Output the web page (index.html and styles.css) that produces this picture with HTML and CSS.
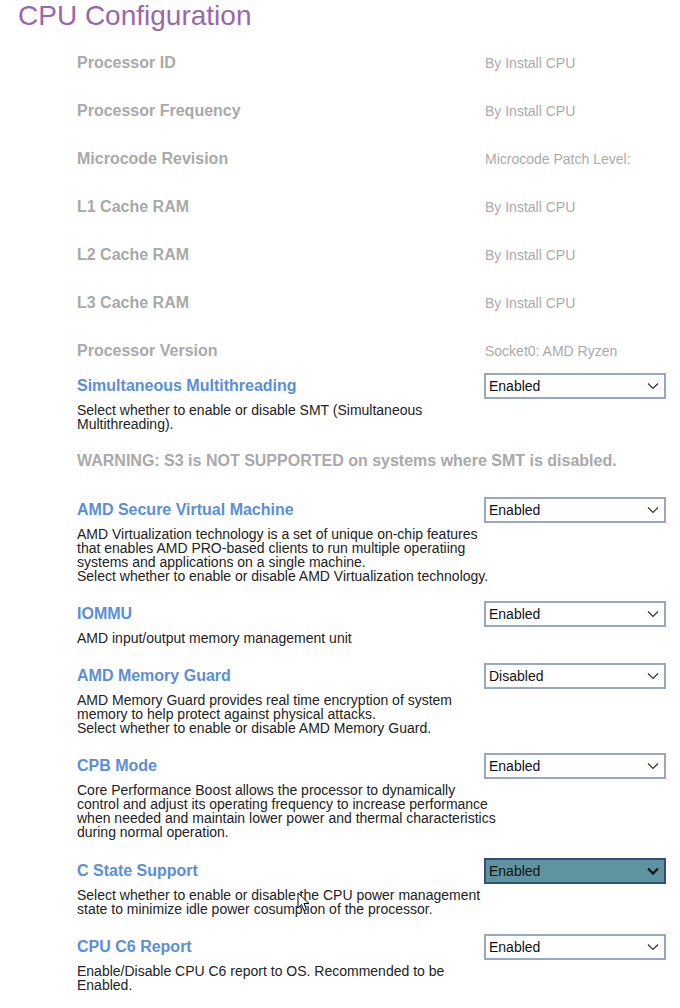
FILE: index.html
```html
<!DOCTYPE html>
<html>
<head>
<meta charset="utf-8">
<link rel="stylesheet" href="styles.css">
</head>
<body>
<div class="page">
  <h1 class="title">CPU Configuration</h1>
  <div class="info">
    <div class="info-row"><span class="info-label">Processor ID</span><span class="info-value">By Install CPU</span></div>
    <div class="info-row"><span class="info-label">Processor Frequency</span><span class="info-value">By Install CPU</span></div>
    <div class="info-row"><span class="info-label">Microcode Revision</span><span class="info-value">Microcode Patch Level:</span></div>
    <div class="info-row"><span class="info-label">L1 Cache RAM</span><span class="info-value">By Install CPU</span></div>
    <div class="info-row"><span class="info-label">L2 Cache RAM</span><span class="info-value">By Install CPU</span></div>
    <div class="info-row"><span class="info-label">L3 Cache RAM</span><span class="info-value">By Install CPU</span></div>
    <div class="info-row"><span class="info-label">Processor Version</span><span class="info-value">Socket0: AMD Ryzen</span></div>
  </div>

  <div class="setting">
    <div class="setting-head">
      <span class="setting-name">Simultaneous Multithreading</span>
      <div class="select"><span>Enabled</span><svg class="chev" width="12" height="8" viewBox="0 0 12 8"><path d="M1 1.5 L6 6.5 L11 1.5" fill="none" stroke="#333" stroke-width="1.2"/></svg></div>
    </div>
    <p class="desc">Select whether to enable or disable SMT (Simultaneous Multithreading).</p>
    <p class="warning">WARNING: S3 is NOT SUPPORTED on systems where SMT is disabled.</p>
  </div>

  <div class="setting">
    <div class="setting-head">
      <span class="setting-name">AMD Secure Virtual Machine</span>
      <div class="select"><span>Enabled</span><svg class="chev" width="12" height="8" viewBox="0 0 12 8"><path d="M1 1.5 L6 6.5 L11 1.5" fill="none" stroke="#333" stroke-width="1.2"/></svg></div>
    </div>
    <p class="desc">AMD Virtualization technology is a set of unique on-chip features that enables AMD PRO-based clients to run multiple operatiing systems and applications on a single machine.<br>Select whether to enable or disable AMD Virtualization technology.</p>
  </div>

  <div class="setting">
    <div class="setting-head">
      <span class="setting-name">IOMMU</span>
      <div class="select"><span>Enabled</span><svg class="chev" width="12" height="8" viewBox="0 0 12 8"><path d="M1 1.5 L6 6.5 L11 1.5" fill="none" stroke="#333" stroke-width="1.2"/></svg></div>
    </div>
    <p class="desc">AMD input/output memory management unit</p>
  </div>

  <div class="setting">
    <div class="setting-head">
      <span class="setting-name">AMD Memory Guard</span>
      <div class="select"><span>Disabled</span><svg class="chev" width="12" height="8" viewBox="0 0 12 8"><path d="M1 1.5 L6 6.5 L11 1.5" fill="none" stroke="#333" stroke-width="1.2"/></svg></div>
    </div>
    <p class="desc">AMD Memory Guard provides real time encryption of system memory to help protect against physical attacks.<br>Select whether to enable or disable AMD Memory Guard.</p>
  </div>

  <div class="setting setting-loose">
    <div class="setting-head">
      <span class="setting-name">CPB Mode</span>
      <div class="select"><span>Enabled</span><svg class="chev" width="12" height="8" viewBox="0 0 12 8"><path d="M1 1.5 L6 6.5 L11 1.5" fill="none" stroke="#333" stroke-width="1.2"/></svg></div>
    </div>
    <p class="desc">Core Performance Boost allows the processor to dynamically control and adjust its operating frequency to increase performance when needed and maintain lower power and thermal characteristics during normal operation.</p>
  </div>

  <div class="setting">
    <div class="setting-head">
      <span class="setting-name">C State Support</span>
      <div class="select select-active"><span>Enabled</span><svg class="chev" width="12" height="8" viewBox="0 0 12 8"><path d="M1 1.5 L6 6.5 L11 1.5" fill="none" stroke="#111" stroke-width="2.2"/></svg></div>
    </div>
    <p class="desc">Select whether to enable or disable the CPU power management state to minimize idle power cosumption of the processor.</p>
    <svg class="cursor" width="13" height="20" viewBox="0 0 13 20"><path d="M1 1 L1 16 L4.5 12.5 L7 18.5 L9.5 17.5 L7 11.5 L12 11.5 Z" fill="#fff" stroke="#000" stroke-width="1"/></svg>
  </div>

  <div class="setting">
    <div class="setting-head">
      <span class="setting-name">CPU C6 Report</span>
      <div class="select"><span>Enabled</span><svg class="chev" width="12" height="8" viewBox="0 0 12 8"><path d="M1 1.5 L6 6.5 L11 1.5" fill="none" stroke="#333" stroke-width="1.2"/></svg></div>
    </div>
    <p class="desc">Enable/Disable CPU C6 report to OS. Recommended to be Enabled.</p>
  </div>
</div>
</body>
</html>
```

FILE: styles.css
```css
html, body {
  margin: 0;
  padding: 0;
  background: #ffffff;
}

body {
  font-family: "Liberation Sans", Arial, sans-serif;
  color: #222;
}

.page {
  width: 680px;
  height: 1008px;
  overflow: hidden;
}

.title {
  margin: 0 0 0 18px;
  font-size: 28px;
  line-height: 32px;
  font-weight: normal;
  color: #9b66b0;
}

.info {
  margin: 22px 0 0 77px;
  display: flex;
  flex-direction: column;
  gap: 30px;
}

.info-row {
  display: flex;
  height: 18px;
  line-height: 18px;
}

.info-label {
  width: 408px;
  font-size: 16px;
  font-weight: bold;
  color: #a9a9a9;
}

.info-value {
  font-size: 14px;
  color: #ababab;
}

.setting {
  position: relative;
  margin: 0 0 18px 77px;
}

.setting-loose {
  margin-bottom: 19px;
}

.info + .setting {
  margin-top: 13px;
}

.setting-head {
  display: flex;
  align-items: center;
  height: 26px;
}

.setting-name {
  width: 407px;
  font-size: 16px;
  font-weight: bold;
  color: #5b8edb;
  line-height: 26px;
}

.select {
  box-sizing: border-box;
  width: 182px;
  height: 26px;
  border: 2px solid #98a7c3;
  background: #fff;
  display: flex;
  align-items: center;
  justify-content: space-between;
  padding: 0 5px 0 3px;
  font-size: 14px;
  color: #111;
}

.select-active {
  background: #5e949f;
  border-color: #354f7d;
}

.chev {
  display: block;
}

.desc {
  margin: 4px 0 0 0;
  width: 421px;
  font-size: 14px;
  line-height: 14px;
  color: #222;
}

.warning {
  margin: 21px 0 27px 0;
  font-size: 16px;
  line-height: 18px;
  font-weight: bold;
  color: #a9a9a9;
}

.cursor {
  position: absolute;
  left: 220px;
  top: 34px;
}
```
